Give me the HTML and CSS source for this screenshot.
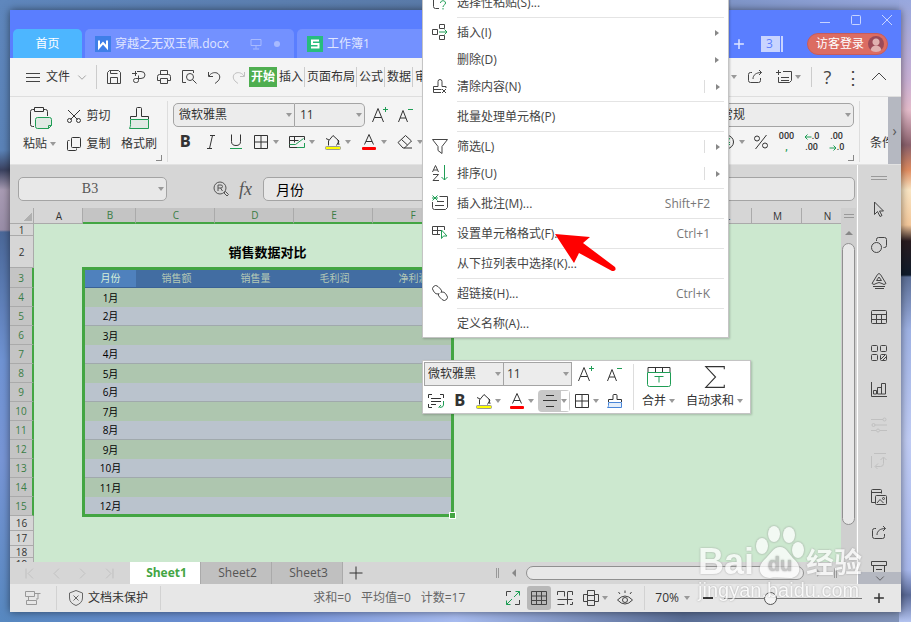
FILE: index.html
```html
<!DOCTYPE html>
<html lang="zh-CN">
<head>
  <meta charset="UTF-8" />
  <meta name="viewport" content="width=device-width, initial-scale=1" />
  <title>工作簿1</title>
  <link rel="stylesheet" href="styles.css">
</head>
<body>

  <!-- Icon set -->
  <svg class="sprite" aria-hidden="true">
    <symbol id="i-save" viewBox="0 0 16 16"><path d="M1.500 14.500V3.500l2-2h9l2 2v11zM4.500 14.500v-6h7v6M4.500 4.500h7M4.500 1.500v3"/></symbol>
    <symbol id="i-export" viewBox="0 0 16 16"><path d="M1 4.500h5M4.500 2v5M6 2.500h4a4 3.500 0 0 1 0 7H7.500v-3M7.500 9.500v2a2 2 0 0 1-2 2h-1a2 2 0 0 1 0-4h3"/></symbol>
    <symbol id="i-print" viewBox="0 0 16 16"><path d="M4.500 5V1.500h7V5M4 11.500H1.500v-4a2 2 0 0 1 2-2h9a2 2 0 0 1 2 2v4H12M4.500 9.500h7v5h-7z"/></symbol>
    <symbol id="i-preview" viewBox="0 0 16 16"><path d="M5 13.500H1.500v-12h11V4"/><circle cx="9" cy="8" r="3.500"/><path d="M11.500 10.500l4 4"/></symbol>
    <symbol id="i-undo" viewBox="0 0 16 16"><path d="M2.500 3v4.500H7M3 7c2-3 5-4 8-3 4 2 3 6 1 8l-3 2.500"/></symbol>
    <symbol id="i-redo" viewBox="0 0 16 16"><path d="M13.500 3v4.500H9M13 7c-2-3-5-4-8-3-4 2-3 6-1 8l3 2.500"/></symbol>
    <symbol id="i-share" viewBox="0 0 16 16"><path d="M5 3.500H3.500a2 2 0 0 0-2 2v6a2 2 0 0 0 2 2h8a2 2 0 0 0 2-2V9M6 10c0-4 3-6.500 8.500-6.500M12 1l2.500 2.500L12 6"/></symbol>
    <symbol id="i-note" viewBox="0 0 16 16"><path d="M0 3.500h5M2.500 1v5M7 2.500h8.500v9l-2 2h-11V8M5 8.500h8M5 11.500h8"/></symbol>
    <symbol id="i-up" viewBox="0 0 16 16"><path d="M1 11l7-7 7 7"/></symbol>
    <symbol id="i-down" viewBox="0 0 16 16"><path d="M3 6l5 5 5-5"/></symbol>
    <symbol id="i-paste" viewBox="0 0 24 24"><path d="M6 20.500H4.500a2 2 0 0 1-2-2v-13a2 2 0 0 1 2-2H7M15 3.500h2.500a2 2 0 0 1 2 2V10M6.500 1.500h9v4h-9z"/><path class="green pale" d="M9.500 11.500h12a2 2 0 0 1 2 2v6l-3 3h-11a2 2 0 0 1-2-2v-7a2 2 0 0 1 2-2z"/><path class="green" d="M20.500 22.500v-3h3"/></symbol>
    <symbol id="i-cut" viewBox="0 0 16 16"><path d="M2 2l9.500 9.500M14 2l-9.500 9.500"/><circle cx="3.500" cy="12.500" r="2"/><circle cx="12.500" cy="12.500" r="2"/></symbol>
    <symbol id="i-copy" viewBox="0 0 16 16"><rect x="5.500" y="1.500" width="9" height="10" rx="1"/><path d="M3.500 4.500h-1a1 1 0 0 0-1 1v8a1 1 0 0 0 1 1h7a1 1 0 0 0 1-1v-1"/></symbol>
    <symbol id="i-brush" viewBox="0 0 24 24"><path class="green pale" d="M3.500 13.500h18v9h-19q1-2 1-4z"/><path d="M3.500 13v-2.500h6v-8q0-1 1-1h3q1 0 1 1v8h7V13"/></symbol>
    <symbol id="i-brush-s" viewBox="0 0 16 16"><path class="blue" d="M1.500 9.500h13v5h-14q1-1 1-2z"/><path d="M1.500 9V6.500h4.500v-4q0-1 1-1h2q1 0 1 1v4h4.500V9"/></symbol>
    <symbol id="i-grid" viewBox="0 0 16 16"><path d="M1.500 1.500h13v13h-13zM8 1.500v13M1.500 8h13"/></symbol>
    <symbol id="i-draw-border" viewBox="0 0 16 16"><path d="M15.500 6V2.500h-15v11h8M5.500 2.500v6M0.500 6.500h9"/><path class="green" d="M0.500 10.500h6l8-6M8 13.500h7.500V9"/></symbol>
    <symbol id="i-fill" viewBox="0 0 16 16"><path d="M3.500 11.500V7L8 1.500 14 7l-2.500 4.500M4 6L1 4.500M13 6l1 5"/><rect class="yellow" x="0.500" y="12.500" width="15" height="3" rx="1"/></symbol>
    <symbol id="i-color" viewBox="0 0 16 16"><path d="M3.500 10.500L8 0.500l4.500 10M5 7.500h6"/><rect class="red" x="1" y="13" width="14" height="3" rx="1"/></symbol>
    <symbol id="i-eraser" viewBox="0 0 16 16"><path d="M1 8.500l7.500-7 6 5.500-7 7H6zM4.500 5.500l6 5.500M7 14h8"/></symbol>
    <symbol id="i-italic" viewBox="0 0 16 16"><path d="M7 1.500h5M4 14.500h5M9.500 1.500l-3 13"/></symbol>
    <symbol id="i-under" viewBox="0 0 16 16"><path d="M3.500 0.500v7q0 4 4.500 4t4.500-4v-7"/><path class="green" d="M2 14.500h12"/></symbol>
    <symbol id="i-bigger" viewBox="0 0 18 18"><path d="M1.500 16L7 2.500 12.500 16M3.500 11.500h7"/><path class="green" d="M12 3.500h5M14.500 1v5"/></symbol>
    <symbol id="i-smaller" viewBox="0 0 18 18"><path d="M2.500 16L7 4.500 11.500 16M4 12h6"/><path class="green" d="M12 3.500h5"/></symbol>
    <symbol id="i-money" viewBox="0 0 16 16"><circle cx="8" cy="8" r="6.500"/><path class="green" d="M5 4l3 4 3-4M5 8.500h6M5 10.500h6M8 8v5"/></symbol>
    <symbol id="i-percent" viewBox="0 0 16 16"><path d="M13.500 1l-11 14"/><circle cx="4" cy="4.500" r="2.500"/><circle cx="12" cy="11.500" r="2.500"/></symbol>
    <symbol id="i-arrow-l" viewBox="0 0 8 6"><path class="green" d="M7.500 3H1M3.500 0.500L1 3l2.500 2.500"/></symbol>
    <symbol id="i-arrow-r" viewBox="0 0 8 6"><path class="green" d="M0.500 3H7M4.500 0.500L7 3 4.500 5.500"/></symbol>
    <symbol id="i-find" viewBox="0 0 16 16"><circle cx="7" cy="7" r="6"/><path d="M5 10V4h3a1.500 1.500 0 0 1 0 3H5M7.500 7L9.500 10M11 12l1.500-1.500 3 3L14 15z"/></symbol>
    <symbol id="i-special" viewBox="0 0 16 16"><path d="M7 14.500H3.500a2 2 0 0 1-2-2V0M12 3.500h1"/><path class="green" d="M8.500 9c0-3 5-3 5 0 0 2-2.500 2-2.500 4M11 14v1.500"/></symbol>
    <symbol id="i-insert" viewBox="0 0 16 16"><path d="M0.500 5.500h5v5h-5zM7.500 0.500h5v4h-5zM7.500 11.500h5v4h-5z"/><path class="green" d="M7 8h8M12.500 5.500L15 8l-2.500 2.500"/></symbol>
    <symbol id="i-clear" viewBox="0 0 16 16"><path d="M9 14.500H1.500v-6h4.500v-5q0-2 2-2t2 2v5h4V10M1.500 11.500h8M10 11l4 4M14 11l-4 4"/></symbol>
    <symbol id="i-filter" viewBox="0 0 16 16"><path d="M0.500 1.500h15l-5.500 7v7l-4-3v-4z"/></symbol>
    <symbol id="i-sort" viewBox="0 0 16 16"><path d="M0.500 7L3.500 0.500 6.500 7M1.500 5h4M1 9.500h5.500l-5.500 6H7"/><path class="green" d="M12.500 0v15M9.500 12l3 3 3-3"/></symbol>
    <symbol id="i-comment" viewBox="0 0 16 16"><path d="M7.500 1.500h8v11l-2 2h-11a2 2 0 0 1-2-2V7M5 6.500h7M3 10.500h9"/><path class="green" d="M0.500 0.500l5 5M5.500 0.500l-5 5M0 3h6"/></symbol>
    <symbol id="i-format" viewBox="0 0 16 16"><path d="M8 9.500H0.500v-8h12V5M0.500 5.500h9M5.500 1.500v8"/><path class="green" d="M9.500 5v8.500l2-2.500h3.500z"/></symbol>
    <symbol id="i-link" viewBox="0 0 16 16"><path d="M6 9a4 4 0 0 1-3.500-1.500l-1-1.500a3 3 0 0 1 4.500-4.500l2.500 2.500a3 3 0 0 1 .5 4M10 7a4 4 0 0 1 3.500 1.500l1 1.500a3 3 0 0 1-4.500 4.500l-2.500-2.500a3 3 0 0 1-.5-4"/></symbol>
    <symbol id="i-lines" viewBox="0 0 16 16"><path d="M0.500 5V1.500H4M12 1.500h3.500V5M0.500 11v3.500H4M3 5.500h10M3 8.500h10M3 11.500h5"/><path class="green" d="M15.500 8v4q0 2.500-4 2.500M13 12l-2.500 2.500"/></symbol>
    <symbol id="i-align" viewBox="0 0 16 16"><path d="M4 2.500h8M1 7.500h14M4 13.500h8"/></symbol>
    <symbol id="i-merge" viewBox="0 0 24 22"><path d="M1 6V1.500h22V6M8.500 1v5M15.500 1v5"/><path class="green" d="M0.500 6.500h23v12q0 2-2 2h-19q-2 0-2-2zM7.500 10.500h9M12 10.500v6"/></symbol>
    <symbol id="i-sum" viewBox="0 0 20 22"><path d="M18.500 4V1.500h-17l9 9.500-9 9.500h17V18"/></symbol>
    <symbol id="i-cursor" viewBox="0 0 16 16"><path d="M3.500 1v12.500l3-3 2.500 5 2-1-2.500-4.500h4z"/></symbol>
    <symbol id="i-shapes" viewBox="0 0 16 16"><circle cx="5.500" cy="10.500" r="5"/><path d="M5.500 4V2.500a2 2 0 0 1 2-2h6a2 2 0 0 1 2 2v6a2 2 0 0 1-2 2h-1"/></symbol>
    <symbol id="i-wordart" viewBox="0 0 16 16"><path d="M1 10.500L6.500 1.500q1.500-2 3 0l5.500 9q-2 2-4 0-3-2-6 0-2 2-4 0zM5.500 7.500L8 4l2.500 3.500zM2 13.500h12M4 15.500h9"/></symbol>
    <symbol id="i-table" viewBox="0 0 16 16"><rect x="0.500" y="1.500" width="15" height="13" rx="1"/><path d="M0.500 5.500h15M0.500 10.500h15M5.500 5.500v9M10.500 5.500v9"/></symbol>
    <symbol id="i-apps" viewBox="0 0 16 16"><rect x="0.500" y="0.500" width="6" height="6" rx="1"/><rect x="9.500" y="0.500" width="6" height="6" rx="1"/><rect x="0.500" y="9.500" width="6" height="6" rx="1"/><rect x="9.500" y="9.500" width="6" height="6" rx="1"/><path d="M10 14l4-4M12 15l3-3"/></symbol>
    <symbol id="i-chart" viewBox="0 0 16 16"><path d="M0.500 1v14.500H16M2.500 13V9.500h3V13zM6.500 13V6.500h4V13zM10.500 13V2.500h4V13z"/></symbol>
    <symbol id="i-sliders" viewBox="0 0 16 16"><path d="M0 2.500h12M4 8h12M0 13.500h5M9 13.500h7"/><circle cx="13.500" cy="2.500" r="1.500"/><circle cx="2.500" cy="8" r="1.500"/><circle cx="7" cy="13.500" r="1.500"/></symbol>
    <symbol id="i-swap" viewBox="0 0 16 16"><path d="M0.500 3v12M3 0.500h12M4.500 13.500h5q3 0 3-3v-6M9.500 7l3-3 3 3M7 10.500l-3 3 3 3"/></symbol>
    <symbol id="i-gallery" viewBox="0 0 16 16"><path d="M4 13.500H0.500v-12q0-1 1-1h8q1 0 1 1v3M0.500 3.500h10"/><rect x="4.500" y="6.500" width="11" height="9" rx="1"/><path d="M6 14l3-3.500 3.500 3.500"/><circle cx="12.500" cy="9.500" r="1"/></symbol>
    <symbol id="i-archive" viewBox="0 0 16 16"><path d="M0.500 0.500h15v4h-15zM2.500 4.500v11h11v-11M5 8.500h6"/></symbol>
    <symbol id="i-first" viewBox="0 0 16 16"><path d="M2.500 2v12M11 2L5 8l6 6"/></symbol>
    <symbol id="i-prev" viewBox="0 0 16 16"><path d="M11 2L5 8l6 6"/></symbol>
    <symbol id="i-next" viewBox="0 0 16 16"><path d="M5 2l6 6-6 6"/></symbol>
    <symbol id="i-last" viewBox="0 0 16 16"><path d="M13.500 2v12M5 2l6 6-6 6"/></symbol>
    <symbol id="i-plus" viewBox="0 0 16 16"><path d="M1.500 8h13M8 1.500v13"/></symbol>
    <symbol id="i-minus" viewBox="0 0 16 16"><path d="M3 8h10"/></symbol>
    <symbol id="i-device" viewBox="0 0 16 16"><path d="M0.500 1.500h9v5h-9zM3.500 6.500v4M1.500 10.500h10v4h-10zM9.500 3.500h6M13 4v5h-2"/></symbol>
    <symbol id="i-shield" viewBox="0 0 16 16"><path d="M8 0.500l6.500 2.500v5q0 5-6.500 7.500Q1.500 13 1.500 8V3zM5.500 5.500l5 5M10.500 5.500l-5 5"/></symbol>
    <symbol id="i-full" viewBox="0 0 16 16"><path d="M1.500 6V1.500H6M14.500 10v4.500H10"/><path class="green" d="M9 7l5.500-5.500M10.500 1.500h4v4M7 9l-5.500 5.500M1.500 10.500v4h4"/></symbol>
    <symbol id="i-normal" viewBox="0 0 16 16"><path d="M0.500 1.500h15v13h-15zM0.500 6h15M0.500 10.500h15M5.500 1.500v13M10.500 1.500v13"/></symbol>
    <symbol id="i-breaks" viewBox="0 0 16 16"><path d="M0.500 5V1.500h7v5M11 1.500h4.500V5M0.500 9.500h15M10.500 1.500v13M0.500 14.500h7M13 14.500h2.500V12"/></symbol>
    <symbol id="i-page" viewBox="0 0 16 16"><path d="M4.500 0.500h7v15h-7zM4.500 4.500h-4v7h4M11.500 4.500h4v7h-4M4.500 5.500h7M4.500 10.500h7"/></symbol>
    <symbol id="i-eye" viewBox="0 0 16 16"><path d="M0.500 10q7.500-8 15 0-7.500 8-15 0zM3 4L1.500 2M8 3V0.500M13 4l1.500-2"/><circle cx="8" cy="10" r="2.500"/></symbol>
    <symbol id="i-screen" viewBox="0 0 12 12"><path d="M1 1.500h10v6H1zM6 8v2.500M3 11h6"/></symbol>
    <symbol id="i-min" viewBox="0 0 10 10"><path d="M0 7.500h10"/></symbol>
    <symbol id="i-max" viewBox="0 0 10 10"><rect x="0.500" y="0.500" width="9" height="9" rx="1"/></symbol>
    <symbol id="i-close" viewBox="0 0 10 10"><path d="M0 0l10 10M10 0L0 10"/></symbol>
    <symbol id="i-w" viewBox="0 0 16 16"><path d="M4 4.500v7l4-4.500 4 4.500v-7"/></symbol>
    <symbol id="i-s" viewBox="0 0 16 16"><path d="M12 4.500H5v3.500h6.500v3.500H4"/></symbol>
  </svg>

  <div class="window">

    <!-- Title bar -->
    <header class="titlebar">
      <div class="window-controls">
        <button aria-label="最小化"><svg class="icon-xs"><use href="#i-min"/></svg></button>
        <button aria-label="最大化"><svg class="icon-xs"><use href="#i-max"/></svg></button>
        <button aria-label="关闭"><svg class="icon-xs"><use href="#i-close"/></svg></button>
      </div>
      <div class="doc-tabs">
        <button class="doc-tab home">首页</button>
        <button class="doc-tab">
          <svg class="icon logo logo-w"><use href="#i-w"/></svg>
          穿越之无双玉佩.docx
          <svg class="icon-sm tab-screen"><use href="#i-screen"/></svg>
          <span class="dot"></span>
        </button>
        <button class="doc-tab"><svg class="icon logo logo-s"><use href="#i-s"/></svg>工作簿1</button>
        <div class="title-right">
          <button class="new-tab" aria-label="新建"><svg class="icon-sm"><use href="#i-plus"/></svg></button>
          <span class="tab-count">3</span>
          <button class="login">访客登录<span class="avatar"></span></button>
        </div>
      </div>
    </header>

    <!-- Menu bar -->
    <nav class="menubar">
      <button class="file-menu"><span class="burger"></span>文件<svg class="icon-sm light"><use href="#i-down"/></svg></button>
      <div class="quick">
        <button aria-label="保存"><svg class="icon"><use href="#i-save"/></svg></button>
        <button aria-label="输出"><svg class="icon"><use href="#i-export"/></svg></button>
        <button aria-label="打印"><svg class="icon"><use href="#i-print"/></svg></button>
        <button aria-label="预览"><svg class="icon"><use href="#i-preview"/></svg></button>
        <button aria-label="撤销"><svg class="icon"><use href="#i-undo"/></svg></button>
        <button aria-label="恢复" class="faded"><svg class="icon"><use href="#i-redo"/></svg></button>
      </div>
      <div class="ribbon-tabs">
        <button class="active">开始</button>
        <button>插入</button>
        <button>页面布局</button>
        <button>公式</button>
        <button>数据</button>
        <button>审阅</button>
      </div>
      <div class="menubar-right">
        <span class="caret"></span>
        <button aria-label="分享"><svg class="icon"><use href="#i-share"/></svg></button>
        <button class="with-caret" aria-label="批注"><svg class="icon"><use href="#i-note"/></svg><span class="caret"></span></button>
        <button class="help" aria-label="帮助">?</button>
        <button class="more" aria-label="更多">⋮</button>
        <button aria-label="收起"><svg class="icon"><use href="#i-up"/></svg></button>
      </div>
    </nav>

    <!-- Ribbon -->
    <section class="ribbon">
      <div class="group clipboard">
        <button class="big"><svg class="icon-lg"><use href="#i-paste"/></svg><span>粘贴<span class="caret"></span></span></button>
        <div class="stack">
          <button><svg class="icon"><use href="#i-cut"/></svg>剪切</button>
          <button><svg class="icon"><use href="#i-copy"/></svg>复制</button>
        </div>
        <button class="big"><svg class="icon-lg"><use href="#i-brush"/></svg><span>格式刷</span></button>
      </div>
      <div class="group font-group">
        <div class="tool-row">
          <span class="combo font-name"><select aria-label="字体"><option>微软雅黑</option></select></span>
          <span class="combo font-size"><select aria-label="字号"><option>11</option></select></span>
          <button class="tool" aria-label="增大字号"><svg class="icon-md"><use href="#i-bigger"/></svg></button>
          <button class="tool" aria-label="减小字号"><svg class="icon-md"><use href="#i-smaller"/></svg></button>
        </div>
        <div class="tool-row">
          <button class="tool bold">B</button>
          <button class="tool" aria-label="倾斜"><svg class="icon"><use href="#i-italic"/></svg></button>
          <button class="tool" aria-label="下划线"><svg class="icon"><use href="#i-under"/></svg></button>
          <button class="tool drop" aria-label="边框"><svg class="icon"><use href="#i-grid"/></svg><span class="caret"></span></button>
          <button class="tool drop" aria-label="绘图边框"><svg class="icon"><use href="#i-draw-border"/></svg><span class="caret"></span></button>
          <button class="tool drop" aria-label="填充颜色"><svg class="icon"><use href="#i-fill"/></svg><span class="caret"></span></button>
          <button class="tool drop" aria-label="字体颜色"><svg class="icon"><use href="#i-color"/></svg><span class="caret"></span></button>
          <button class="tool drop" aria-label="清除"><svg class="icon"><use href="#i-eraser"/></svg><span class="caret"></span></button>
        </div>
      </div>
      <div class="group number-group">
        <div class="tool-row">
          <span class="combo number-format"><select aria-label="数字格式"><option>常规</option></select></span>
        </div>
        <div class="tool-row">
          <button class="tool drop" aria-label="货币"><svg class="icon"><use href="#i-money"/></svg><span class="caret"></span></button>
          <button class="tool" aria-label="百分比"><svg class="icon"><use href="#i-percent"/></svg></button>
          <button class="tool digits"><span>000</span><span class="comma">,</span></button>
          <button class="tool digits"><span><svg><use href="#i-arrow-l"/></svg>.0</span><span>.00</span></button>
          <button class="tool digits"><span>.00</span><span><svg><use href="#i-arrow-r"/></svg>.0</span></button>
        </div>
      </div>
      <div class="cond">条件</div>
      <button class="ribbon-scroll" aria-label="向右滚动">›</button>
    </section>

    <div class="workspace">
      <main class="editor">
        <!-- Formula bar -->
        <div class="formula-bar">
          <span class="combo name-box"><input type="text" value="B3" aria-label="名称框"></span>
          <svg class="icon"><use href="#i-find"/></svg>
          <span class="fx">fx</span>
          <input class="formula" type="text" value="月份" aria-label="编辑栏">
        </div>

        <!-- Sheet -->
        <div class="sheet-area">
          <div class="sheet">
            <table>
              <colgroup>
                <col class="c-head"><col class="c-a"><col class="c-b">
                <col class="c-data" span="4">
                <col class="c-rest" span="8">
              </colgroup>
              <thead>
                <tr>
                  <th class="corner"></th><th>A</th>
                  <th class="sel">B</th><th class="sel">C</th><th class="sel">D</th><th class="sel">E</th><th class="sel">F</th>
                  <th>G</th><th>H</th><th>I</th><th>J</th><th>K</th><th>L</th><th>M</th><th>N</th>
                </tr>
              </thead>
              <tbody>
                <tr class="r-short"><th>1</th><td colspan="14"></td></tr>
                <tr class="r-title"><th>2</th><td></td><td class="title" colspan="5">销售数据对比</td><td colspan="8"></td></tr>
                <tr class="sel r-names"><th>3</th><td></td><td class="cur">月份</td><td>销售额</td><td>销售量</td><td>毛利润</td><td>净利润</td></tr>
                <tr class="sel"><th>4</th><td></td><td>1月</td><td colspan="4"></td></tr>
                <tr class="sel alt"><th>5</th><td></td><td>2月</td><td colspan="4"></td></tr>
                <tr class="sel"><th>6</th><td></td><td>3月</td><td colspan="4"></td></tr>
                <tr class="sel alt"><th>7</th><td></td><td>4月</td><td colspan="4"></td></tr>
                <tr class="sel"><th>8</th><td></td><td>5月</td><td colspan="4"></td></tr>
                <tr class="sel alt"><th>9</th><td></td><td>6月</td><td colspan="4"></td></tr>
                <tr class="sel"><th>10</th><td></td><td>7月</td><td colspan="4"></td></tr>
                <tr class="sel alt"><th>11</th><td></td><td>8月</td><td colspan="4"></td></tr>
                <tr class="sel"><th>12</th><td></td><td>9月</td><td colspan="4"></td></tr>
                <tr class="sel alt"><th>13</th><td></td><td>10月</td><td colspan="4"></td></tr>
                <tr class="sel"><th>14</th><td></td><td>11月</td><td colspan="4"></td></tr>
                <tr class="sel alt"><th>15</th><td></td><td>12月</td><td colspan="4"></td></tr>
                <tr class="r-mid"><th>16</th><td colspan="14"></td></tr>
                <tr class="r-mid"><th>17</th><td colspan="14"></td></tr>
                <tr class="r-short"><th>18</th><td colspan="14"></td></tr>
                <tr class="r-short"><th>19</th><td colspan="14"></td></tr>
              </tbody>
            </table>
            <div class="selection"><span class="fill-handle"></span></div>
          </div>
          <div class="vscroll">
            <span class="split"></span>
            <span class="tri up"></span>
            <span class="vthumb"></span>
          </div>
        </div>

        <!-- Sheet tabs -->
        <div class="sheet-tabs">
          <div class="sheet-nav">
            <button aria-label="第一张"><svg class="icon-sheet"><use href="#i-first"/></svg></button>
            <button aria-label="上一张"><svg class="icon-sheet"><use href="#i-prev"/></svg></button>
            <button aria-label="下一张"><svg class="icon-sheet"><use href="#i-next"/></svg></button>
            <button aria-label="最后一张"><svg class="icon-sheet"><use href="#i-last"/></svg></button>
          </div>
          <button class="sheet-tab active">Sheet1</button>
          <button class="sheet-tab">Sheet2</button>
          <button class="sheet-tab">Sheet3</button>
          <button class="add-sheet" aria-label="新建工作表"><svg class="icon"><use href="#i-plus"/></svg></button>
          <div class="hscroll">
            <span class="split-v"></span>
            <span class="tri left"></span>
            <span class="hthumb"></span>
            <span class="tri right"></span>
            <span class="split-v"></span>
          </div>
        </div>
      </main>

      <aside class="side-tools">
        <span class="split"></span>
        <button aria-label="选择"><svg class="icon"><use href="#i-cursor"/></svg></button>
        <button aria-label="形状"><svg class="icon"><use href="#i-shapes"/></svg></button>
        <button aria-label="艺术字"><svg class="icon"><use href="#i-wordart"/></svg></button>
        <button aria-label="表格"><svg class="icon"><use href="#i-table"/></svg></button>
        <button aria-label="应用"><svg class="icon"><use href="#i-apps"/></svg></button>
        <button aria-label="图表"><svg class="icon"><use href="#i-chart"/></svg></button>
        <button aria-label="设置" class="faded"><svg class="icon"><use href="#i-sliders"/></svg></button>
        <button aria-label="转换" class="faded"><svg class="icon"><use href="#i-swap"/></svg></button>
        <button aria-label="图库"><svg class="icon"><use href="#i-gallery"/></svg></button>
        <button aria-label="分享"><svg class="icon"><use href="#i-share"/></svg></button>
        <button aria-label="归档"><svg class="icon"><use href="#i-archive"/></svg></button>
        <button class="side-more" aria-label="更多"><svg class="icon-sm"><use href="#i-down"/></svg></button>
      </aside>
    </div>

    <!-- Status bar -->
    <footer class="statusbar">
      <span class="status-cell device"><svg class="icon"><use href="#i-device"/></svg></span>
      <span class="status-cell protect"><svg class="icon"><use href="#i-shield"/></svg>文档未保护</span>
      <span class="stats"><span>求和=0</span><span>平均值=0</span><span>计数=17</span></span>
      <div class="view-tools">
        <button aria-label="全屏"><svg class="icon"><use href="#i-full"/></svg></button>
        <button class="active" aria-label="普通视图"><svg class="icon"><use href="#i-normal"/></svg></button>
        <button aria-label="分页预览"><svg class="icon"><use href="#i-breaks"/></svg></button>
        <button class="wide" aria-label="页面布局"><svg class="icon"><use href="#i-page"/></svg><span class="caret"></span></button>
        <button aria-label="护眼模式"><svg class="icon"><use href="#i-eye"/></svg></button>
      </div>
      <div class="zoom">
        <button class="zoom-value">70%<span class="caret"></span></button>
        <button aria-label="缩小"><svg class="icon thick"><use href="#i-minus"/></svg></button>
        <input type="range" min="0" max="100" value="32" aria-label="缩放">
        <button aria-label="放大"><svg class="icon-sm thick"><use href="#i-plus"/></svg></button>
      </div>
    </footer>
  </div>

  <!-- Cell context menu -->
  <ul class="context-menu" role="menu">
    <li><svg class="icon"><use href="#i-special"/></svg>选择性粘贴(S)...</li>
    <li class="sep"></li>
    <li><svg class="icon"><use href="#i-insert"/></svg>插入(I)<span class="sub"></span></li>
    <li>删除(D)<span class="sub"></span></li>
    <li><svg class="icon"><use href="#i-clear"/></svg>清除内容(N)<span class="sub split-sub"></span></li>
    <li class="sep"></li>
    <li>批量处理单元格(P)</li>
    <li class="sep"></li>
    <li><svg class="icon"><use href="#i-filter"/></svg>筛选(L)<span class="sub split-sub"></span></li>
    <li><svg class="icon"><use href="#i-sort"/></svg>排序(U)<span class="sub split-sub"></span></li>
    <li class="sep"></li>
    <li><svg class="icon"><use href="#i-comment"/></svg>插入批注(M)...<kbd>Shift+F2</kbd></li>
    <li class="sep"></li>
    <li><svg class="icon"><use href="#i-format"/></svg>设置单元格格式(F)...<kbd>Ctrl+1</kbd></li>
    <li class="sep"></li>
    <li>从下拉列表中选择(K)...</li>
    <li class="sep"></li>
    <li><svg class="icon"><use href="#i-link"/></svg>超链接(H)...<kbd>Ctrl+K</kbd></li>
    <li class="sep"></li>
    <li>定义名称(A)...</li>
  </ul>

  <!-- Floating mini toolbar -->
  <div class="mini-toolbar">
    <div class="mini-left">
      <div class="tool-row">
        <span class="combo mini-font"><select aria-label="字体"><option>微软雅黑</option></select></span>
        <span class="combo mini-size"><select aria-label="字号"><option>11</option></select></span>
        <button class="tool" aria-label="增大字号"><svg class="icon-md"><use href="#i-bigger"/></svg></button>
        <button class="tool" aria-label="减小字号"><svg class="icon-md"><use href="#i-smaller"/></svg></button>
      </div>
      <div class="tool-row">
        <button class="tool" aria-label="自动换行"><svg class="icon"><use href="#i-lines"/></svg></button>
        <button class="tool bold">B</button>
        <button class="tool drop" aria-label="填充颜色"><svg class="icon"><use href="#i-fill"/></svg><span class="caret"></span></button>
        <button class="tool drop" aria-label="字体颜色"><svg class="icon"><use href="#i-color"/></svg><span class="caret"></span></button>
        <button class="tool drop pressed" aria-label="对齐"><svg class="icon"><use href="#i-align"/></svg><span class="caret"></span></button>
        <button class="tool drop" aria-label="边框"><svg class="icon"><use href="#i-grid"/></svg><span class="caret"></span></button>
        <button class="tool" aria-label="格式刷"><svg class="icon"><use href="#i-brush-s"/></svg></button>
      </div>
    </div>
    <div class="mini-right">
      <button class="big"><svg class="icon-lg"><use href="#i-merge"/></svg><span>合并<span class="caret"></span></span></button>
      <button class="big"><svg class="icon-lg"><use href="#i-sum"/></svg><span>自动求和<span class="caret"></span></span></button>
    </div>
  </div>

  <svg class="pointer" viewBox="0 0 62 40" aria-hidden="true"><path d="M0 1l35 3-7 6 32 24q2 4-3 4L24 20l-5 10z"/></svg>

  <!-- Watermark -->
  <div class="watermark" aria-hidden="true">
    <div class="mark-row">
      <span class="mark-bai">Bai</span>
      <span class="mark-paw">
        <svg viewBox="0 0 48 52"><ellipse cx="6" cy="20" rx="6" ry="8"/><ellipse cx="18" cy="8" rx="6" ry="8"/><ellipse cx="33" cy="9" rx="6" ry="8"/><ellipse cx="42" cy="24" rx="6" ry="8"/><path d="M24 21c7 0 9 8 15 13 8 8 4 18-5 18-7 0-13-1-20 0-10 0-14-10-6-18 6-5 9-13 16-13z"/></svg>
        <span>du</span>
      </span>
      <span class="mark-cn">经验</span>
    </div>
    <div class="mark-url">jingyan.baidu.com</div>
  </div>

</body>
</html>
```
FILE: styles.css
```css
/* Reset */
* {
  box-sizing: border-box;
  margin: 0;
  padding: 0;
}
body {
  height: 100vh;
  padding: 10px;
  overflow: hidden;
  position: relative;
  display: flex;
  font-family: "Open Sans", "Noto Sans CJK SC", sans-serif;
  font-size: 12px;
  line-height: 16px;
  color: #333;
  background:
    linear-gradient(#5f87bd, #5b83b8 150px, #3b4260 170px, #a99cb4 190px, #9a8ea8 230px, #4b6899 232px, #7094d4 360px, #7896d6 460px, #5788c0) left / 12px 100% no-repeat,
    linear-gradient(#98a8de, #c9b0d4 80px, #e5bccb 110px, #8a606c 145px, #e08c60 170px, #fae6c4 190px, #f3c79a 225px, #2a1c20 241px, #101c2c 275px, #5d7098 277px, #9fb2e4 330px, #c0ccf4 440px, #a8b8ec 570px, #5a6a98 595px, #b4c4f0) right / 12px 100% no-repeat,
    linear-gradient(90deg, #5788c0, #7391d8 30%, #a8bcf0 50%, #5a6e96 75%, #8496bc) bottom / 100% 12px no-repeat,
    linear-gradient(90deg, #5f87bd, #5a7aa8 50%, #98a8de) top / 100% 12px no-repeat;
}
button,
input,
select {
  font: inherit;
  color: inherit;
  background: none;
  border: none;
}
button {
  display: flex;
  align-items: center;
  justify-content: center;
  white-space: nowrap;
  flex-shrink: 0;
}

/* Icons */
.sprite {
  position: absolute;
  width: 0;
  height: 0;
}
svg {
  display: block;
  flex-shrink: 0;
  fill: none;
  stroke: currentColor;
}
.icon { width: 16px; height: 16px; }
.icon-xs { width: 10px; height: 10px; }
.icon-sm { width: 12px; height: 12px; }
.icon-md { width: 18px; height: 18px; }
.icon-lg { width: 24px; height: 24px; }
.icon-sheet { width: 13px; height: 13px; }
.thick { stroke-width: 2; }
.light { color: #888; }
.green { stroke: #1f9d55; }
.pale { fill: #e0eae4; }
.blue { stroke: #4a86d8; fill: #e4eefa; }
.yellow { fill: #ff0; stroke: #999; }
.red { fill: #f00; stroke: none; }
.faded { color: #c0c0c0; }
.caret {
  display: inline-block;
  flex-shrink: 0;
  border: 3px solid transparent;
  border-top: 4px solid #999;
  border-bottom: none;
}

/* Window */
.window {
  flex: 1;
  min-width: 0;
  display: flex;
  flex-direction: column;
  background: #d6d6d6;
  box-shadow: 0 0 8px rgba(0, 0, 0, 0.5);
}

/* Title bar */
.titlebar {
  background: #5a7eff;
  color: #fff;
}
.window-controls {
  height: 19px;
  display: flex;
  justify-content: flex-end;
  gap: 21px;
  padding-right: 9px;
  color: #c8d4ff;
}
.doc-tabs {
  height: 29px;
  display: flex;
  gap: 3px;
  padding-left: 3px;
}
.doc-tab {
  width: 209px;
  justify-content: flex-start;
  gap: 4px;
  padding-left: 10px;
  border-radius: 5px 5px 0 0;
  background: #7391ff;
  color: #e0e6ff;
}
.doc-tab.home {
  width: 69px;
  padding: 0;
  justify-content: center;
  background: #4db6ff;
  color: #fff;
}
.logo { stroke: #fff; stroke-width: 2; }
.logo-w { background: #3f7fe8; }
.logo-s { background: #27bd7e; }
.tab-screen { margin-left: 17px; color: #a8baff; }
.dot {
  width: 6px;
  height: 6px;
  margin-left: 8px;
  border-radius: 50%;
  background: #a8baff;
}
.title-right {
  margin-left: auto;
  padding-right: 13px;
  display: flex;
  align-items: center;
}
.new-tab { width: 20px; margin-right: 12px; color: #dfe6ff; stroke-width: 2; }
.tab-count {
  width: 22px;
  border-right: 5px double #c8d4ff;
  background: #c8d4ff;
  background-clip: padding-box;
  color: #5a7eff;
  text-align: center;
  margin-right: 24px;
}
.login {
  height: 22px;
  gap: 4px;
  padding: 0 3px 0 8px;
  border: 1px solid #c75c5c;
  border-radius: 11px;
  background: #dc6c62;
  color: #fff;
}
.avatar {
  width: 16px;
  height: 16px;
  border-radius: 50%;
  background: radial-gradient(circle at 8px 6px, #e0b0b0 3px, transparent 4px), radial-gradient(circle at 8px 15px, #e0b0b0 5px, transparent 6px), #9c4a58;
}

/* Menu bar */
.menubar {
  height: 39px;
  display: flex;
  align-items: center;
  background: #f4f4f4;
  border-bottom: 1px solid #dedede;
}
.file-menu {
  height: 24px;
  gap: 6px;
  padding: 0 8px 0 16px;
  border-right: 1px solid #ccc;
}
.burger {
  width: 14px;
  height: 9px;
  border-top: 1px solid #444;
  border-bottom: 1px solid #444;
  background: linear-gradient(#444, #444) 0 3px / 14px 1px no-repeat;
}
.quick {
  display: flex;
  gap: 9px;
  padding: 0 2px 0 9px;
  color: #444;
}
.quick .faded { color: #c0c0c0; }
.ribbon-tabs {
  display: flex;
  height: 20px;
}
.ribbon-tabs button {
  padding: 0 1px 0 2px;
  border-right: 1px solid #ccc;
}
.ribbon-tabs .active {
  padding: 0 2px;
  border: none;
  background: #4fae50;
  color: #fff;
  font-weight: bold;
}
.menubar-right {
  margin-left: auto;
  padding-right: 14px;
  display: flex;
  align-items: center;
  gap: 10px;
  color: #444;
}
.with-caret { gap: 3px; margin-left: 3px; }
.help {
  width: 24px;
  height: 20px;
  border-left: 1px solid #ccc;
  padding-left: 8px;
  font-size: 18px;
}
.more { width: 10px; font-size: 18px; margin: 0 3px; }

/* Ribbon */
.ribbon {
  height: 68px;
  display: flex;
  background: #f4f4f4;
  border-bottom: 1px solid #e2e2e2;
}
.group {
  position: relative;
  margin: 4px 0 2px;
  display: flex;
}
.clipboard::after,
.number-group::after {
  content: "";
  position: absolute;
  right: 5px;
  bottom: 1px;
  width: 5px;
  height: 5px;
  border-right: 1px solid #888;
  border-bottom: 1px solid #888;
}
.clipboard {
  width: 158px;
  padding: 5px 10px 10px 13px;
  justify-content: space-between;
  border-right: 1px solid #ddd;
}
.big {
  flex-direction: column;
  justify-content: space-between;
}
.big > span { display: flex; align-items: center; gap: 3px; }
.stack {
  display: flex;
  flex-direction: column;
  justify-content: space-between;
  padding: 2px 0 0;
}
.stack button { gap: 4px; }
.font-group,
.number-group {
  flex-direction: column;
  gap: 3px;
  padding: 2px 5px;
}
.tool-row {
  display: flex;
  align-items: center;
  height: 24px;
}
.tool { width: 25px; height: 22px; }
.drop {
  width: 36px;
  justify-content: flex-start;
  gap: 4px;
  padding-left: 5px;
}
.bold {
  font-family: Roboto, sans-serif;
  font-size: 16px;
  font-weight: 900;
}
.combo {
  position: relative;
  height: 24px;
  display: flex;
  border: 1px solid #a4a4a4;
  background: #ececec;
}
.combo::after {
  content: "";
  position: absolute;
  right: 2px;
  top: 9px;
  border: 3px solid transparent;
  border-top: 4px solid #999;
  border-bottom: none;
}
.combo select,
.combo input {
  width: 100%;
  padding-left: 5px;
  appearance: none;
}
.font-name { width: 122px; border-radius: 5px 0 0 5px; }
.font-size { width: 70px; border-left: none; border-radius: 0 5px 5px 0; margin-right: 2px; }
.number-group {
  margin-left: auto;
  border-right: 1px solid #ddd;
}
.number-format { width: 142px; border-radius: 5px; }
.number-format select { padding-left: 8px; }
.number-group .drop { padding-left: 7px; }
.number-group .drop + .tool { margin-right: 1px; }
.digits {
  flex-direction: column;
  font-family: Roboto, sans-serif;
  font-size: 9px;
  line-height: 11px;
  font-weight: 500;
}
.digits span { display: flex; align-items: center; }
.digits svg { width: 8px; height: 6px; }
.digits .comma { color: #1f9d55; font-weight: 900; }
.cond {
  width: 28px;
  padding: 38px 0 0 10px;
  overflow: hidden;
  white-space: nowrap;
}
.ribbon-scroll { width: 13px; background: #b5b8c1; color: #555; font-size: 14px; }

/* Workspace */
.workspace {
  flex: 1;
  min-height: 0;
  display: flex;
}
.editor {
  flex: 1;
  min-width: 0;
  display: flex;
  flex-direction: column;
}
.formula-bar {
  height: 43px;
  display: flex;
  align-items: center;
  padding: 5px 2px 0 8px;
  color: #555;
}
.name-box {
  width: 149px;
  margin-right: 46px;
  border-radius: 5px;
  background: #e8e8e8;
}
.name-box input {
  padding-right: 10px;
  text-align: center;
  font-family: "Liberation Serif", serif;
  font-size: 14px;
}
.fx {
  width: 24px;
  margin-left: 10px;
  font-family: "Liberation Serif", serif;
  font-style: italic;
  font-size: 18px;
}
.formula-bar .formula {
  flex: 1;
  min-width: 0;
  height: 24px;
  padding-left: 12px;
  border: 1px solid #a4a4a4;
  border-radius: 5px;
  background: #e8e8e8;
  color: #000;
  font-size: 14px;
}

/* Sheet */
.sheet-area {
  flex: 1;
  min-height: 0;
  display: flex;
}
.sheet {
  flex: 1;
  min-width: 0;
  position: relative;
  overflow: hidden;
  background: #cce8cf;
}
table {
  width: 841px;
  table-layout: fixed;
  border-collapse: separate;
  border-spacing: 0;
  font-size: 10px;
  line-height: 10px;
  text-align: center;
}
.c-head { width: 24px; }
.c-a { width: 49px; }
.c-b { width: 53px; }
.c-data { width: 79px; }
.c-rest { width: 50px; }
tr { height: 19px; }
.r-short { height: 12px; }
.r-mid { height: 15px; }
.r-title { height: 32px; }
.r-names { height: 20px; }
th {
  font-weight: normal;
  background: #d6d6d6;
  border-right: 1px solid #aaa;
  border-bottom: 1px solid #aaa;
}
thead tr { height: 16px; }
thead th { padding-left: 2px; }
thead th.sel {
  background: #c4c4c4;
  color: #3a7d44;
  border-bottom: 2px solid #43a543;
}
.corner {
  background: linear-gradient(135deg, transparent 50%, #b0b0b0 50%) 13px 4px / 9px 9px no-repeat #d6d6d6;
}
tr.sel th {
  background: #c4c4c4;
  color: #3a7d44;
  border-right: 2px solid #43a543;
}
td { color: #000; }
tr.sel td { padding-left: 2px; }
.title {
  font-size: 13px;
  line-height: 16px;
  font-weight: bold;
}
tr.sel td:nth-child(n+3) { background: #aec6af; }
tr.alt td:nth-child(n+3) { background: #bac3cd; border-bottom: 1px solid #a0a9ac; }
tr.r-names td:nth-child(n+3) {
  background: #426da2;
  color: #b4c8b6;
  border-bottom: 1px solid #3a6296;
}
tr.r-names td.cur:nth-child(n+3) { background: #4f81bd; color: #d8f0da; }
.selection {
  position: absolute;
  left: 72px;
  top: 59px;
  width: 372px;
  height: 250px;
  border: 3px solid #43a543;
}
.fill-handle {
  position: absolute;
  right: -5px;
  bottom: -5px;
  width: 7px;
  height: 7px;
  border: 1px solid #fff;
  background: #43a543;
}
.vscroll {
  width: 15px;
  display: flex;
  flex-direction: column;
  align-items: center;
  background: #cfcfcf;
  margin-right: 1px;
}
.split {
  width: 10px;
  height: 4px;
  border-top: 1px solid #999;
  border-bottom: 1px solid #999;
}
.vscroll .split { margin: 6px 0 13px; }
.tri { border: 4px solid transparent; }
.tri.up { border-bottom-color: #888; border-top: none; }
.tri.left { border-right-color: #888; border-left: none; }
.tri.right { border-left-color: #aaa; border-right: none; }
.vthumb {
  flex: 1;
  width: 13px;
  margin: 8px 0 37px;
  border: 1px solid #909090;
  border-radius: 7px;
  background: #e8e8e8;
}

/* Sheet tabs */
.sheet-tabs {
  height: 22px;
  display: flex;
}
.sheet-nav {
  width: 120px;
  display: flex;
  gap: 13px;
  padding-left: 14px;
  color: #bbb;
}
.sheet-tab {
  width: 71px;
  padding-left: 3px;
  border-right: 1px solid #aaa;
  background: #c0c0c0;
  color: #555;
}
.sheet-tab.active {
  background: #fff;
  color: #43a543;
  font-weight: bold;
}
.add-sheet { width: 25px; }
.hscroll {
  margin-left: auto;
  width: 361px;
  display: flex;
  align-items: center;
  gap: 10px;
}
.hscroll .tri.left { margin-left: 3px; }
.split-v {
  width: 3px;
  height: 10px;
  border-left: 1px solid #999;
  border-right: 1px solid #999;
}
.hthumb {
  flex: 1;
  height: 14px;
  border: 1px solid #909090;
  border-radius: 7px;
  background: #e8e8e8;
}
.tri.right { margin: 0 3px; }
.hscroll .split-v:last-child { margin-right: 20px; }

/* Side tools */
.side-tools {
  width: 44px;
  display: flex;
  flex-direction: column;
  align-items: center;
  gap: 20px;
  overflow: hidden;
  position: relative;
  padding: 11px 1px 0 0;
  border-left: 1px solid #fff;
  color: #444;
}
.side-tools .split { width: 16px; flex-shrink: 0; margin-bottom: 1px; }
.side-tools .faded { color: #c0c0c0; }
.side-tools .side-more {
  position: absolute;
  left: 0;
  right: 0;
  bottom: 0;
  height: 12px;
  background: #b5b8c1;
}

/* Status bar */
.statusbar {
  height: 28px;
  display: flex;
  align-items: center;
  background: #e7e7e7;
}
.status-cell {
  height: 24px;
  display: flex;
  align-items: center;
  gap: 4px;
  border-right: 1px solid #d2d2d2;
}
.device { width: 47px; padding-left: 15px; color: #999; }
.protect { width: 104px; padding-left: 11px; }
.protect svg { color: #666; }
.stats {
  flex: 1;
  display: flex;
  justify-content: flex-end;
  gap: 10px;
  color: #666;
}
.view-tools {
  display: flex;
  align-items: center;
  gap: 2px;
  margin-left: 36px;
  padding-right: 7px;
  color: #444;
  border-right: 1px solid #d2d2d2;
}
.view-tools button { width: 24px; height: 24px; }
.view-tools .active { background: #b8b8b8; border-radius: 3px; }
.view-tools .wide { width: 32px; gap: 3px; }
.zoom {
  display: flex;
  align-items: center;
  padding: 0 16px 0 10px;
  gap: 8px;
}
.zoom-value { gap: 5px; margin-right: 2px; }
.zoom input {
  width: 138px;
  height: 14px;
  margin-right: 3px;
  appearance: none;
  background: linear-gradient(#777, #777) center / 100% 1px no-repeat;
}
.zoom input::-webkit-slider-thumb {
  appearance: none;
  width: 13px;
  height: 13px;
  border: 1px solid #555;
  border-radius: 50%;
  background: #f4f4f4;
}

/* Context menu */
.context-menu {
  position: absolute;
  left: 422px;
  top: -12px;
  width: 307px;
  list-style: none;
  background: #fff;
  border: 1px solid #c4c4c4;
  box-shadow: 1px 1px 2px rgba(0, 0, 0, 0.2);
  color: #444;
}
.context-menu li {
  position: relative;
  height: 27px;
  display: flex;
  align-items: center;
  padding: 0 18px 0 34px;
}
.context-menu li.sep {
  height: 1px;
  margin: 1px 4px 1px 34px;
  padding: 0;
  background: #e4e4e4;
}
.context-menu .icon {
  position: absolute;
  left: 9px;
  top: 5px;
}
.context-menu kbd {
  margin-left: auto;
  font: inherit;
  color: #777;
}
.sub {
  width: 16px;
  height: 13px;
  margin: 0 -15px 0 auto;
  display: flex;
  align-items: center;
  justify-content: center;
}
.sub::after {
  content: "";
  border: 3px solid transparent;
  border-left: 4px solid #888;
  border-right: none;
}
.split-sub { width: 21px; padding-left: 5px; border-left: 1px solid #ddd; }

/* Mini toolbar */
.mini-toolbar {
  position: absolute;
  left: 422px;
  top: 360px;
  display: flex;
  background: #fff;
  border: 1px solid #c4c4c4;
  box-shadow: 1px 1px 2px rgba(0, 0, 0, 0.2);
}
.mini-left {
  width: 210px;
  display: flex;
  flex-direction: column;
  gap: 3px;
  padding: 1px 1px 0;
}
.mini-left .tool { width: 24px; }
.mini-left .tool-row .combo ~ .tool { width: 28px; }
.mini-left .tool-row .drop { width: 33px; padding-left: 4px; gap: 3px; }
.mini-left .tool-row .pressed {
  width: 32px;
  border-radius: 4px;
  background: linear-gradient(#fff, #fff) right 1px center / 8px 20px no-repeat #c8c8c8;
}
.mini-font { width: 80px; }
.mini-size { width: 68px; border-left: none; }
.mini-font select,
.mini-size select { padding-left: 3px; }
.mini-right {
  display: flex;
  gap: 11px;
  margin: 3px 0;
  padding: 1px 7px 1px 8px;
  border-left: 1px solid #ddd;
}

/* Red arrow */
.pointer {
  position: absolute;
  left: 555px;
  top: 233px;
  width: 62px;
  height: 40px;
  fill: #f00;
  stroke: none;
}

/* Watermark */
.watermark {
  position: absolute;
  right: 49px;
  bottom: 20px;
  width: 164px;
  color: #fff;
  opacity: 0.75;
  text-shadow: 0 0 2px #888;
}
.mark-row {
  display: flex;
  align-items: flex-end;
  justify-content: space-between;
}
.mark-bai {
  font: bold 36px/32px "Liberation Sans", sans-serif;
}
.mark-paw {
  position: relative;
  width: 48px;
  height: 52px;
}
.mark-paw svg { fill: #fff; stroke: none; filter: drop-shadow(0 0 1px #888); }
.mark-paw span {
  position: absolute;
  left: 0;
  right: 0;
  bottom: 3px;
  text-align: center;
  color: #bbb;
  font: bold 20px/22px "Liberation Sans", sans-serif;
}
.mark-cn {
  font-size: 28px;
  line-height: 32px;
  font-weight: bold;
}
.mark-url {
  font: 20px/24px "Liberation Sans", sans-serif;
}
```
